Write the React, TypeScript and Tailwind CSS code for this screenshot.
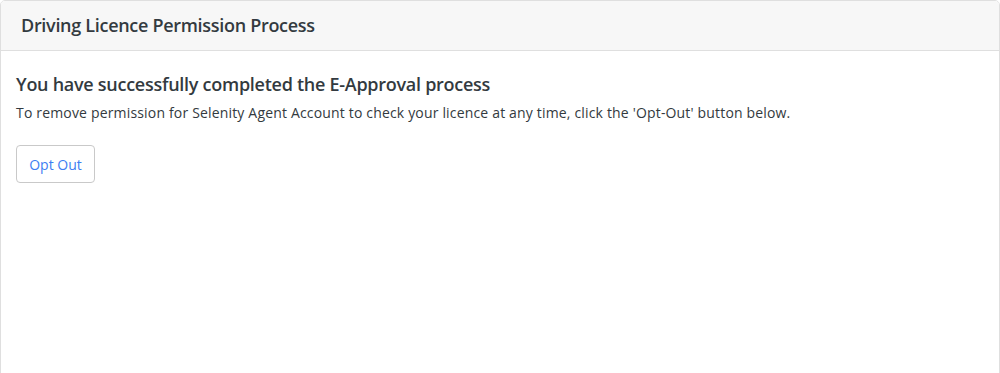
import React from 'react';

const App: React.FC = () => {
  return (
    <div className="w-[1000px] h-[373px] bg-white overflow-hidden font-['Open_Sans',sans-serif]">
      <div className="w-[1000px] h-[400px] border border-[#dfdfdf] rounded-[5px] overflow-hidden">
        {/* Card header */}
        <div className="h-[50px] bg-[#f7f7f7] border-b border-[#dfdfdf] flex items-center px-[20px]">
          <h2 className="text-[18px] font-semibold text-[#333a40] tracking-[-0.3px]">Driving Licence Permission Process</h2>
        </div>

        {/* Card body */}
        <div className="px-[15px] pt-[19px]">
          <h3 className="text-[18px] font-semibold text-[#333a40] leading-[28px] tracking-[-0.27px]">You have successfully completed the E-Approval process</h3>
          <p className="text-[14px] text-[#333a40] leading-[20px] mt-[5px] tracking-[0.17px]">
            To remove permission for Selenity Agent Account to check your licence at any time, click the 'Opt-Out' button below.
          </p>
          <button className="mt-[22px] w-[79px] h-[38px] border border-[#c9c9c9] rounded-[4px] bg-white text-[14px] text-[#3d7ef2]">
            Opt Out
          </button>
        </div>
      </div>
    </div>
  );
};

export default App;
